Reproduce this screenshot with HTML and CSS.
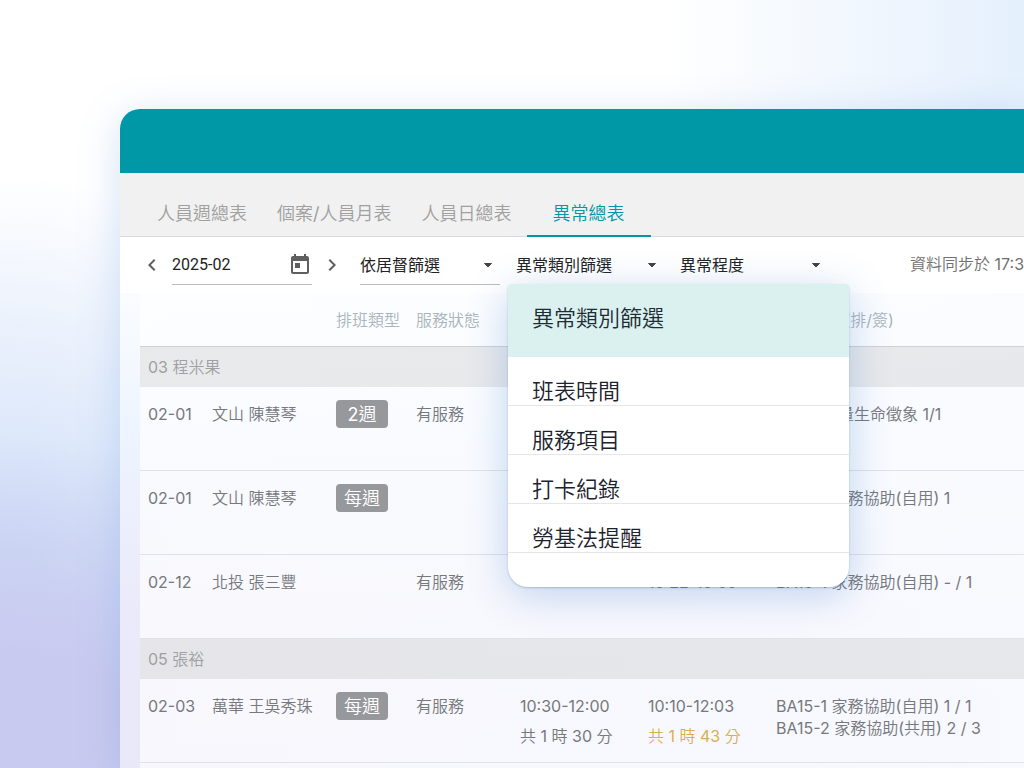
FILE: index.html
```html
<!DOCTYPE html>
<html lang="zh-Hant">
<head>
  <meta charset="UTF-8" />
  <meta name="viewport" content="width=device-width, initial-scale=1.0"/>
  <title>異常總表</title>
  <link rel="stylesheet" href="styles.css">
</head>
<body>
  <div class="app">
    <header class="topbar"></header>

    <nav class="tabs">
      <a href="#week">人員週總表</a>
      <a href="#month">個案/人員月表</a>
      <a href="#day">人員日總表</a>
      <a href="#abnormal" class="active">異常總表</a>
    </nav>

    <div class="toolbar">
      <button class="arrow" aria-label="上個月">
        <svg width="24" height="24" viewBox="0 0 24 24"><path d="M15.41 7.41 14 6l-6 6 6 6 1.41-1.41L10.83 12z"/></svg>
      </button>
      <label class="month">
        <input type="text" value="2025-02" aria-label="月份" />
        <svg width="24" height="24" viewBox="0 0 24 24"><path d="M19 3h-1V1h-2v2H8V1H6v2H5c-1.1 0-2 .9-2 2v14c0 1.1.9 2 2 2h14c1.1 0 2-.9 2-2V5c0-1.1-.9-2-2-2zm0 16H5V8h14zM7 10h5v5H7z"/></svg>
      </label>
      <button class="arrow" aria-label="下個月">
        <svg width="24" height="24" viewBox="0 0 24 24"><path d="M8.59 16.59 10 18l6-6-6-6-1.41 1.41L13.17 12z"/></svg>
      </button>
      <div class="filters">
        <select aria-label="依居督篩選"><option>依居督篩選</option></select>
        <div class="filter-open">
          <select class="wide" aria-label="異常類別篩選"><option>異常類別篩選</option></select>
          <div class="menu">
            <h2>異常類別篩選</h2>
            <button>班表時間</button>
            <button>服務項目</button>
            <button>打卡紀錄</button>
            <button>勞基法提醒</button>
          </div>
        </div>
        <select class="wide" aria-label="異常程度"><option>異常程度</option></select>
      </div>
      <span class="sync">資料同步於 17:30</span>
    </div>

    <div class="panel">
      <table>
        <colgroup>
          <col class="c-date"><col class="c-name"><col class="c-type"><col class="c-status"><col class="c-time"><col class="c-time"><col>
        </colgroup>
        <thead>
          <tr>
            <th></th>
            <th></th>
            <th>排班類型</th>
            <th>服務狀態</th>
            <th></th>
            <th></th>
            <th>服務項目 (排/簽)</th>
          </tr>
        </thead>
        <tbody>
          <tr class="group"><td colspan="7">03 程米果</td></tr>
          <tr>
            <td>02-01</td>
            <td>文山 陳慧琴</td>
            <td><span class="badge">2週</span></td>
            <td>有服務</td>
            <td></td>
            <td></td>
            <td>BA03 測量生命徵象 1/1</td>
          </tr>
          <tr>
            <td>02-01</td>
            <td>文山 陳慧琴</td>
            <td><span class="badge">每週</span></td>
            <td></td>
            <td></td>
            <td></td>
            <td>BA15-1 家務協助(自用) 1</td>
          </tr>
          <tr>
            <td>02-12</td>
            <td>北投 張三豐</td>
            <td></td>
            <td>有服務</td>
            <td></td>
            <td>10:22-10:50</td>
            <td>BA15-1 家務協助(自用) - / 1</td>
          </tr>
          <tr class="group"><td colspan="7">05 張裕</td></tr>
          <tr>
            <td>02-03</td>
            <td>萬華 王吳秀珠</td>
            <td><span class="badge">每週</span></td>
            <td>有服務</td>
            <td>10:30-12:00<div class="total">共 1 時 30 分</div></td>
            <td>10:10-12:03<div class="total warn">共 1 時 43 分</div></td>
            <td>BA15-1 家務協助(自用) 1 / 1<br>BA15-2 家務協助(共用) 2 / 3</td>
          </tr>
        </tbody>
      </table>
    </div>
  </div>
</body>
</html>
```

FILE: styles.css
```css
* {
  box-sizing: border-box;
}
body {
  margin: 0;
  height: 100vh;
  padding: 109px 0 0 120px;
  overflow: hidden;
  font-family: Inter, "Noto Sans CJK TC DemiLight", "Noto Sans CJK TC", sans-serif;
  font-size: 16px;
  color: #76787c;
  background:
    radial-gradient(ellipse 460px 330px at 0% 100%, #c9caef 35%, rgba(200, 208, 242, 0) 100%),
    radial-gradient(ellipse 400px 480px at 0% 85%, #cdddf8 20%, rgba(208, 224, 248, 0) 100%),
    linear-gradient(to right, #fff 65%, #e5f0fd 100%);
}
button,
input,
select {
  font: inherit;
  color: inherit;
  border: none;
  background: none;
  padding: 0;
  margin: 0;
}
svg {
  display: block;
  fill: #5f5f5f;
}
.app {
  display: flex;
  flex-direction: column;
  height: 100%;
  border-top-left-radius: 20px;
  background: linear-gradient(to top, #e9e8f9 0%, #ebeafa 25%, #edf4fe 50%, #fbfeff 75%);
  box-shadow: 0 8px 40px rgba(80, 140, 220, 0.25);
}
.topbar {
  flex: none;
  height: 64px;
  border-top-left-radius: 20px;
  background: #0097a7;
}
.tabs {
  display: flex;
  flex: none;
  align-items: flex-end;
  height: 64px;
  padding-left: 22px;
  background: #f1f1f1;
  border-bottom: 1px solid #dadada;
}
.tabs a {
  padding: 0 15px;
  height: 48px;
  margin-bottom: -1px;
  font-size: 18px;
  line-height: 50px;
  white-space: nowrap;
  color: #a0a0a0;
  text-decoration: none;
}
.tabs .active {
  padding: 0 26px;
  color: #0097a7;
  border-bottom: 2px solid #0097a7;
}
.toolbar {
  display: flex;
  flex: none;
  align-items: center;
  height: 56px;
  padding-left: 20px;
  background: #fff;
}
.arrow {
  flex: none;
  width: 24px;
  height: 24px;
}
.month {
  display: flex;
  flex: none;
  align-items: center;
  width: 140px;
  height: 40px;
  margin: 0 8px;
  border-bottom: 1px solid #bdbdbd;
}
.month input {
  flex: 1;
  min-width: 0;
  font-family: Roboto, sans-serif;
  color: #222;
}
.filters {
  display: flex;
  flex: none;
  gap: 16px;
  margin-left: 16px;
}
.filters select {
  flex: none;
  width: 140px;
  height: 40px;
  appearance: none;
  padding-bottom: 2px;
  font-family: "Noto Sans CJK TC", sans-serif;
  color: #222;
  border-bottom: 1px solid #bdbdbd;
  background: url("data:image/svg+xml,%3Csvg xmlns='http://www.w3.org/2000/svg' width='24' height='24'%3E%3Cpath d='M8.5 10.5l3.5 3.5 3.5-3.5z' fill='%23444' stroke='%23444' stroke-linejoin='round'/%3E%3C/svg%3E") right center no-repeat;
}
.filters .wide {
  width: 148px;
}
.filter-open {
  position: relative;
}
.menu {
  position: absolute;
  z-index: 2;
  top: 39px;
  left: -8px;
  width: 341px;
  padding-bottom: 34px;
  border-radius: 4px 4px 20px 20px;
  overflow: hidden;
  background: #fff;
  box-shadow: 0 1px 2px rgba(60, 90, 140, 0.3), 0 8px 40px rgba(60, 120, 200, 0.3);
}
.menu h2 {
  margin: 0;
  padding: 0 24px 5px;
  font-size: 22px;
  font-weight: 400;
  line-height: 68px;
  color: #1e2c36;
  background: #daf1ef;
}
.menu button {
  display: block;
  width: 100%;
  height: 49px;
  padding: 20px 24px 0;
  font-size: 22px;
  line-height: 28px;
  text-align: left;
  color: #1c222e;
  border-bottom: 1px solid #e4e6ea;
}
.sync {
  margin-left: 82px;
  line-height: 20px;
  padding-bottom: 2px;
  white-space: nowrap;
  color: #707070;
}
.panel {
  flex: 1;
  margin-left: 20px;
  background: linear-gradient(to right, rgba(255, 255, 255, 0.65), rgba(250, 252, 255, 0.85));
}
table {
  width: 100%;
  table-layout: fixed;
  border-collapse: separate;
  border-spacing: 0;
}
.c-date {
  width: 64px;
}
.c-name {
  width: 124px;
}
.c-type {
  width: 80px;
}
.c-status {
  width: 104px;
}
.c-time {
  width: 128px;
}
th {
  height: 54px;
  padding: 0 0 2px 8px;
  font-weight: 400;
  text-align: left;
  white-space: nowrap;
  color: #aab5bd;
  border-bottom: 1px solid #cfd1d3;
}
td {
  height: 84px;
  padding: 16px 0 0 8px;
  line-height: 22px;
  vertical-align: top;
  white-space: nowrap;
  border-bottom: 1px solid #dfe2e8;
}
.group td {
  height: 40px;
  padding-top: 0;
  vertical-align: middle;
  color: #9fa0a2;
  background: rgba(160, 160, 155, 0.2);
  border-bottom: none;
}
.badge {
  display: block;
  width: 52px;
  height: 28px;
  margin-top: -3px;
  padding-top: 1px;
  border-radius: 4px;
  font-size: 18px;
  line-height: 28px;
  text-align: center;
  color: #fff;
  background: #97989c;
}
.total {
  margin-top: 8px;
}
.warn {
  color: #dcae52;
}
```
